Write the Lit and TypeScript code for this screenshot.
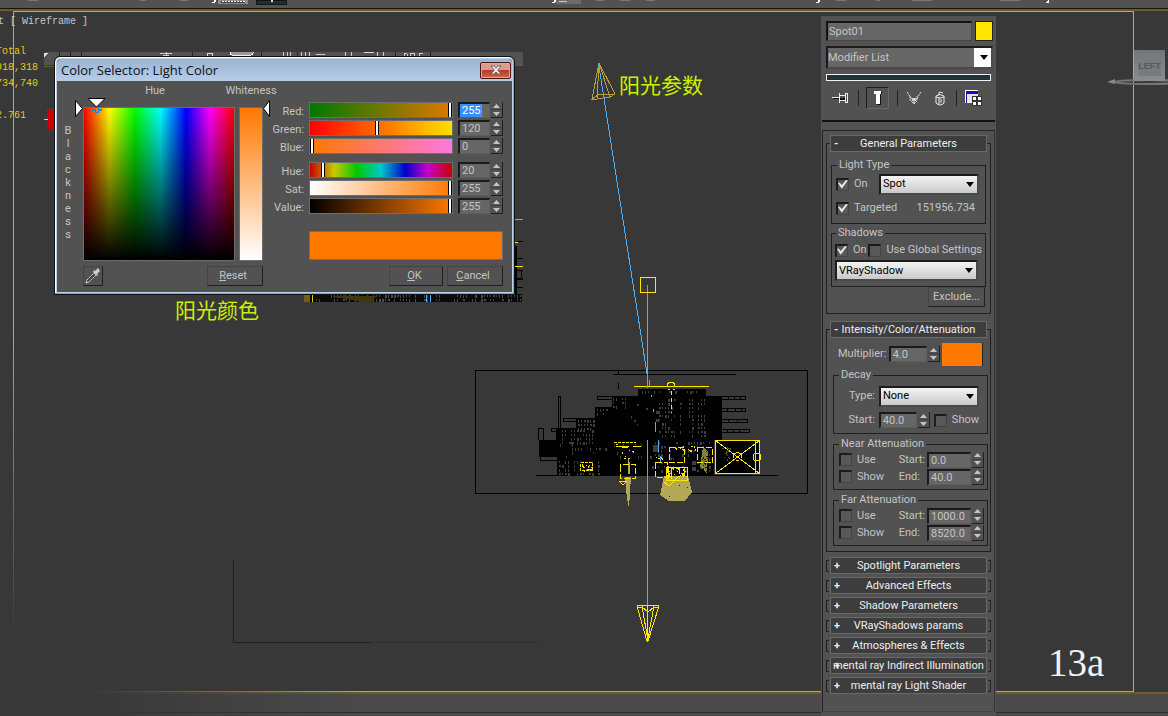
import { LitElement, html, svg, css } from "lit";
import { customElement } from "lit/decorators.js";

type Channel = { id: string; label: string; value: number };

const RGB: Channel[] = [
  { id: "red", label: "Red:", value: 255 },
  { id: "green", label: "Green:", value: 120 },
  { id: "blue", label: "Blue:", value: 0 },
];
const HSV: Channel[] = [
  { id: "hue", label: "Hue:", value: 20 },
  { id: "sat", label: "Sat:", value: 255 },
  { id: "val", label: "Value:", value: 255 },
];
const CLOSED = [
  "Spotlight Parameters",
  "Advanced Effects",
  "Shadow Parameters",
  "VRayShadows params",
  "Atmospheres & Effects",
  "mental ray Indirect Illumination",
  "mental ray Light Shader",
];

// Small deterministic generator used for the wireframe texture.
function random(seed: number) {
  let s = seed * 7919;
  return () => {
    s = (s * 16807) % 2147483647;
    return s / 2147483647;
  };
}

// Gaps between dense wires: columns of short slits inside a region.
function slits(seed: number, x: number, y: number, w: number, h: number, density: number) {
  const r = random(seed);
  let d = "";
  for (let cx = x; cx < x + w; cx += 3) {
    if (r() > 0.75) continue;
    for (let cy = y; cy < y + h; cy += 4) {
      if (r() < density) {
        const gw = r() > 0.7 ? 2 : 1;
        d += `M${cx} ${cy}h${gw}v${r() > 0.5 ? 3 : 2}h-${gw}z`;
      }
    }
  }
  return d;
}

function specks(seed: number, x: number, y: number, w: number, h: number, n: number) {
  const r = random(seed);
  let d = "";
  for (let i = 0; i < n; i++) {
    d += `M${x + Math.floor(r() * w)} ${y + Math.floor(r() * h)}h${1 + Math.floor(r() * 3)}v${1 + Math.floor(r() * 2)}h-1z`;
  }
  return d;
}

const scene = svg`
  <defs>
    <linearGradient id="fadeX" x1="0" x2="1" y1="0" y2="0">
      <stop offset="0" stop-color="#383838"/><stop offset="1" stop-color="#383838" stop-opacity="0"/>
    </linearGradient>
    <linearGradient id="fadeY" x1="0" x2="0" y1="0" y2="1">
      <stop offset="0" stop-color="#383838" stop-opacity="0"/><stop offset="1" stop-color="#383838"/>
    </linearGradient>
    <linearGradient id="cube" x1="0" x2="0" y1="0" y2="1">
      <stop offset="0" stop-color="#71747a"/><stop offset="1" stop-color="#8a8c91"/>
    </linearGradient>
  </defs>

  <g shape-rendering="crispEdges">
    <rect width="1168" height="8" fill="#525252"/>
    <rect y="8" width="1168" height="1" fill="#151515"/>
    <rect y="9" width="1168" height="2" fill="#6f5c24"/>
    <rect x="218" width="30" height="4" fill="#8b8b8b"/>
    <path d="M221 1h24v2h-24z" fill="#3f3f3f"/>
    <path d="M222 1.500h24" stroke="#fff" stroke-dasharray="2 1"/>
    <rect x="256" width="30" height="4" fill="#1f2e36" stroke="#161616"/>
    <rect x="271" width="2" height="2" fill="#ddd"/>
    <rect x="556" width="25" height="4" fill="#6c6c6c"/>
    <path d="M559 1.500h8" stroke="#ccc"/>
    <path d="M552 2h2v-2h1v1h-1v1h-2zM816 2h2v-2h1v1h-1v1h-2zM1046 2h2v-2M212 2h2v-2h1v1h-1v1h-2z" fill="#fff" stroke="#fff"/>
    <path d="M28 .5h10M140 .5h6M180 .5h8M596 .5h8M620 .5h10M646 .5h9M836 .5h10M876 .5h4M912 .5h20M1000 .5h20" stroke="#777"/>

    <rect y="692" width="1168" height="2" fill="#6f5c24"/>
    <rect y="694" width="1168" height="22" fill="#4a4a4a"/>
    <path d="M0 712.500h1168" stroke="#2c2c2c"/>
    <path d="M13.500 690V11.500H1133.500V691.500H14" fill="none" stroke="#c0b31a"/>
  </g>
  <rect x="0" y="690" width="90" height="26" fill="#383838"/>
  <rect x="90" y="690" width="280" height="26" fill="url(#fadeX)"/>
  <rect x="10" y="330" width="8" height="310" fill="url(#fadeY)"/>
  <rect x="10" y="640" width="8" height="60" fill="#383838"/>

  <g shape-rendering="crispEdges" fill="none">
    <path d="M233.500 560V642.500H370" stroke="#1e1e1e"/>
    <path d="M370 642.500h170" stroke="#303030"/>
  </g>

  <!-- second screenshot that lies under the dialog -->
  <g shape-rendering="crispEdges">
    <rect x="44" y="52" width="479" height="13" fill="#525252"/>
    <path d="M44 66.500h12M513 65.500h10" stroke="#6f5c24"/>
    <path d="M59.500 52v6M70.500 52v6M81.500 52v6M192.500 52v4M261.500 52v4M297.500 52v4M395.500 52v4M430.500 52v4" stroke="#222"/>
    <path d="M160 53.500h12M163 55.500h6M166 52v5M283 52v4M287 52v4M290 52v4M301 52v4M305 52v4M309 52v4M345 52v4M351 52v4M377 52v4M383 52v4M316 54.500h9M312 56.500h14" stroke="#ccc"/>
    <rect x="230" y="50" width="23" height="5" rx="2" fill="#999" stroke="#eee"/>
    <rect x="228" y="48" width="28" height="4" fill="#383838"/>
    <path d="M364 52.500h10M207 56v-3h5v3" stroke="#ddd" fill="none"/>
    <path d="M404 56v-2l2-1 1 1v2M410 56v-3h4v3M423 53h-4v3" stroke="#ccc" fill="none"/>
    <path d="M44 53h4l-4 4z" fill="#ddd"/>
    <rect x="47" y="109" width="8" height="20" fill="#cf0000"/>
    <path d="M44 119.500h4" stroke="#ffe600"/>
    <path d="M513 219.500h10" stroke="#c0b31a"/>
    <path d="M513 246h4v50h-4zM517 241h6v1h-6zM517 258h6v1h-6zM517 270h6v1h-6zM517 278h6v2h-6zM517 287h6v1h-6zM521 271v8h1v-8z" fill="#000"/>
    <path d="M515 242h3M515 266h8" stroke="#ffe600"/>
    <rect x="304" y="294" width="218" height="8" fill="#0b0b0b"/>
    <path d="${slits(77, 310, 295, 212, 7, 0.75)}" fill="#4a4a4a"/>
    <path d="M304 294h6v8h-6z" fill="#6d6022"/>
    <path d="M330 296h46l-4 6h-10z" fill="#3f380d"/>
    <path d="M312.500 294v8" stroke="#e5d500"/>
    <path d="M426.500 295v7M430.500 295v7" stroke="#4ab0ff"/>
  </g>

  <!-- building wireframe -->
  <g shape-rendering="crispEdges">
    <rect x="475.500" y="370.500" width="332" height="123" fill="none" stroke="#000"/>
    <path d="M613 374.500h123M618.500 371v4M618.500 383v6M536 475.500h242" stroke="#000"/>
    <path d="M638 389h68v7h16v44h-8v35H557v-18h-18v-17h17v-12h20v-10h19v-11h17v-11h26z" fill="#000"/>
    <g fill="none" stroke="#000">
      <path d="M558.500 428V396.500h2V428M538.500 440V428.500h5V440M540.500 457v3h17M612 396.500h-15v3h15M595 418.500h-32v3h32M556 428.500h-5v3h5"/>
      <path d="M722 396.500h23v3h-23M722 408.500h23v3h-23M722 419.500h25v3h-25M722 429.500h27v3h-27"/>
      <path d="M728.500 396v4M734.500 396v4M740.500 396v4M727.500 408v4M735.500 408v4M741.500 408v4M728.500 419v4M737.500 419v4M727.500 429v4M733.500 429v4M739.500 429v4"/>
    </g>
    <g fill="#3e3e3e">
      <path d="${slits(11, 613, 398, 14, 10, 0.9)}"/>
      <path d="${slits(23, 597, 409, 12, 8, 0.9)}"/>
      <path d="${slits(35, 578, 420, 16, 10, 0.9)}"/>
      <path d="${slits(47, 559, 430, 36, 14, 0.8)}"/>
      <path d="${slits(59, 642, 391, 64, 4, 0.7)}"/>
      <path d="${slits(61, 656, 399, 50, 40, 0.65)}"/>
      <path d="${slits(73, 560, 444, 92, 14, 0.3)}"/>
      <path d="${slits(85, 559, 461, 40, 13, 0.8)}"/>
      <path d="${slits(97, 652, 442, 60, 32, 0.35)}"/>
      <path d="${slits(15, 628, 404, 20, 34, 0.08)}"/>
      <path d="M656 411h4v3h-4zM656 419h3v3h-3zM653 445h5v7h-5zM692 461h4v4h-4zM692 467h4v4h-4zM569 442h5v2h-5z"/>
    </g>
    <path d="M625 477h6l-1 15-1 16-2-9z" fill="#b3a854"/>
    <path d="M628.500 458v16M629.500 462v12" stroke="#b3a854"/>
    <path d="M664 476h24l4 16-7 9h-16l-9-6z" fill="#b3a854"/>
    <path d="M703 447l5 4-1 23-7-7z" fill="#b3a854" opacity=".75"/>
    <path d="${specks(9, 701, 448, 7, 24, 14)}" fill="#111"/>
    <path d="M669 496h1v1h-1zM679 485h1v1h-1zM687 487h1v1h-1z" fill="#222"/>

    <path d="M634 386.500h75" stroke="#ffe600"/>
    <g fill="none" stroke="#ffe600">
      <path d="M667.500 386v-2l2-2h3l2 2v2M668 389h2M673 389h2"/>
      <path d="M671.500 391v22" stroke-dasharray="4 3"/>
      <rect x="715.500" y="440.500" width="44" height="33" fill="#000"/>
      <path d="M716 441l43 32M759 441l-43 32"/>
      <circle cx="737.500" cy="456.500" r="4"/>
      <circle cx="757" cy="457" r="4"/>
      <path d="M755.500 441v32"/>
      <path d="M620.500 470v-5.500h15v14h-15z" stroke-dasharray="6 2"/>
      <path d="M616 446.500h13M633 446.500h8M616 444.500h2M622 447.500h6"/>
      <path d="M614 442h22" stroke-dasharray="3 1"/>
      <path d="M669.500 447.500h15v15h-15zM697.500 447.500h15v15h-15zM655.500 462.500h12v15h-12z" stroke-dasharray="6 2"/>
      <path d="M666.500 467.500h21v13h-21zM668 466v14M671 467v12M679 468v6M684 467v9"/>
      <path d="M619 481h8l-4 4zM663 481l6 5 9-9"/>
      <rect x="580.500" y="462.500" width="12" height="8" stroke-dasharray="3 1"/>
    </g>
    <path d="${specks(19, 581, 463, 10, 8, 13)}" fill="#ffe600"/>
    <path d="${specks(29, 666, 466, 20, 12, 34)}" fill="#ffe600"/>
    <path d="${specks(39, 655, 457, 10, 3, 6)}${specks(49, 688, 446, 8, 5, 7)}${specks(59, 622, 449, 14, 12, 6)}${specks(69, 674, 446, 10, 5, 8)}" fill="#ffe600"/>
    <path d="${specks(79, 717, 446, 14, 14, 12)}" fill="#5c5218"/>
  </g>

  <!-- spot light, its target line and the target cone -->
  <g fill="none" shape-rendering="crispEdges">
    <path d="M599 63L592 99l5 0L599 63L615 94l-5 3-13 2M599 63l11 34M592 99l6-4 17-1" stroke="#b3a040"/>
    <path d="M598.500 63L648 380" stroke="#4ab0ff"/>
    <path d="M649.500 380v6M651.500 395v2M653.500 409v3M655.500 422v10M658.500 440v12M660.500 456v6" stroke="#4ab0ff"/>
    <path d="M647.500 285V388M647.500 440V494" stroke="#4ab0ff"/>
    <path d="M647.500 494V606" stroke="#85a0b2"/>
    <rect x="640.500" y="277.500" width="15" height="15" stroke="#ffe600"/>
    <path d="M637 605.500h22M637 606l10 35M659 606l-11 35M642 606l5.500 32M654 606l-6 32M638 607h4l6 5 6-5h4M647.500 606v36" stroke="#ffe600"/>
  </g>

  <ellipse cx="1148" cy="82" rx="34" ry="2" fill="none" stroke="#73757a" stroke-width="2"/>
  <path d="M1107 82l8-3v5z" fill="#888"/>
  <rect x="1134" y="50" width="31" height="31" fill="url(#cube)"/>
  <rect x="1138" y="54" width="23" height="22" fill="#777a7f"/>
  <text class="cube" x="1149.500" y="69" text-anchor="middle">LEFT</text>

  <g class="stat">
    <text x="-2" y="24" fill="#c6c6c6" xml:space="preserve">t [ Wireframe ]</text>
    <g fill="#e0ca1c">
      <text x="-4" y="54">Total</text>
      <text x="-4" y="70">918,318</text>
      <text x="-4" y="86">734,740</text>
      <text x="-4" y="118">2.761</text>
    </g>
  </g>
  <g class="note">
    <text x="619" y="93">阳光参数</text>
    <text x="175" y="318">阳光颜色</text>
  </g>
  <text class="figure" x="1048" y="676">13a</text>
`;

@customElement("app-root")
export class AppRoot extends LitElement {
  static styles = css`
    :host {
      display: block;
      position: relative;
      min-height: 100vh;
      overflow: hidden;
      background: #383838;
      color: #c4c4c4;
      font: 11px/14px Roboto, "Liberation Sans", sans-serif;
    }
    * { box-sizing: border-box; }
    button, input, select { font: inherit; color: inherit; margin: 0; padding: 0; border-radius: 0; }
    button { cursor: default; }

    .scene { position: absolute; inset: 0; width: 100%; height: 100%; }
    .stat { font: 10px "Liberation Mono", monospace; }
    .note { font: 21px "Noto Sans CJK SC", sans-serif; fill: #cbf000; }
    .figure { font: 39px "Liberation Serif", serif; fill: #f2f2f2; }
    .cube { font: bold 9px "Liberation Sans", sans-serif; fill: #55585d; }

    .desk { position: relative; display: flex; justify-content: flex-end; padding: 16px 172px 0 0; min-height: 100vh; }

    /* dialog window */
    .dialog {
      position: absolute; left: 54px; top: 56px;
      background: #525252;
      border: 1px solid #111; border-radius: 6px 6px 0 0;
      box-shadow: inset -1px -1px 0 #3fc3e6, inset 1px 1px 0 #fff, inset 0 0 0 2px #b9cfe6;
      padding: 2px;
    }
    .title {
      display: flex; align-items: center; justify-content: space-between;
      height: 22px; padding: 0 1px 0 4px;
      background: linear-gradient(#9db4d2, #b6cde8);
      border-radius: 4px 4px 0 0;
      color: #0a1018; font: 13px/20px "Open Sans", "Noto Sans", sans-serif;
    }
    .close {
      display: grid; place-items: center; width: 31px; height: 17px;
      border: 1px solid #4a1712; border-radius: 2px;
      box-shadow: inset 0 0 0 1px #e2a79a;
      background: linear-gradient(#dc9b8c 0 45%, #b73a25 50%, #cf6a50);
    }
    .body { display: flex; padding-bottom: 6px; }
    .mix { display: grid; grid-template-columns: 26px 156px 24px; grid-template-rows: 26px 154px 25px; }
    .cap { justify-self: center; padding-top: 3px; white-space: nowrap; }
    .cap-hue { grid-column: 2; padding-right: 12px; }
    .black { display: grid; grid-auto-rows: 13px; width: 22px; padding-top: 17px; text-align: center; line-height: 13px; }
    .spectrum {
      position: relative; width: 152px; border: 1px solid #6d6d6d;
      background: linear-gradient(transparent, #000), linear-gradient(90deg, #f00, #ff0 17%, #0f0 34%, #0ff 51%, #00f 68%, #f0f 84%, #f00);
    }
    .marks { position: absolute; left: -9px; top: -12px; overflow: visible; }
    .white { border: 1px solid #6d6d6d; background: linear-gradient(#ff7800, #fff); }
    .foot { grid-column: 2 / 4; display: flex; justify-content: space-between; margin-top: 5px; height: 20px; }
    .btn {
      height: 20px; background: #525252; line-height: 16px;
      border: 1px solid; border-color: #444 #1f1f1f #1f1f1f #444;
    }
    .pick { width: 20px; display: grid; place-items: center; }
    .w56 { width: 56px; padding-right: 4px; }
    .w54 { width: 54px; padding-right: 3px; }

    .values { padding: 21px 9px 0 0; }
    .channels { display: grid; row-gap: 2px; }
    .channels + .channels { margin-top: 8px; }
    .channel { display: grid; grid-template-columns: 41px 144px 45px; column-gap: 5px; height: 16px; }
    .channel label { text-align: right; line-height: 19px; }
    .slider { appearance: none; width: 144px; height: 16px; border: 1px solid #6d6d6d; outline: 0; }
    .slider::-webkit-slider-thumb { appearance: none; width: 4px; height: 14px; background: #fff; border: solid #000; border-width: 0 1px; }
    .red { background: linear-gradient(90deg, #007800, #e07800); }
    .green { background: linear-gradient(90deg, #f00, #ffe000); }
    .blue { background: linear-gradient(90deg, #ff7800, #ff78e0); }
    .hue { background: linear-gradient(90deg, #c80000, #c8c800 17%, #00c800 33%, #00c8c8 50%, #0000c8 67%, #c800c8 83%, #c80000); }
    .sat { background: linear-gradient(90deg, #fff, #ff7800); }
    .val { background: linear-gradient(90deg, #000, #ff7800); }
    .preview { height: 29px; margin: 17px 0 6px 46px; border: 1px solid #6d6d6d; background: #ff7800; }
    .actions { display: flex; justify-content: flex-end; gap: 4px; }

    .spin { display: flex; height: 16px; }
    .spin input {
      min-width: 0; flex: 1; padding: 0 2px; height: 16px; background: #666; outline: 0;
      border: solid; border-width: 2px 1px 1px 2px; border-color: #1a1a1a #5e5e5e #5e5e5e #1a1a1a;
    }
    .spin input.picked { background: linear-gradient(90deg, #3390ff 21px, #e07818 21px 22px, #666 22px); color: #fff; }
    .arrows { display: grid; width: 12px; border: solid #1f1f1f; border-width: 0 1px 1px 0; margin-left: 1px; }
    .arrows button { display: grid; place-items: center; border: 0; background: #525252; min-height: 0; }
    .arrows button + button { border-top: 1px solid #404040; }
    .arrows svg { display: block; }

    /* command panel */
    .panel { width: 175px; padding: 5px 1px 4px; background: #525252; display: flex; flex-direction: column; }
    .top { display: grid; grid-template-columns: minmax(0, 1fr); row-gap: 5px; padding: 0 2px 10px 4px; border-bottom: 2px solid #111; }
    .named { display: flex; justify-content: space-between; height: 20px; }
    .name {
      flex: 1; min-width: 0; margin-right: 3px; padding: 0 1px; background: #666; outline: 0;
      border: solid; border-width: 2px 1px 1px 2px; border-color: #141414 #484848 #484848 #141414;
    }
    .swatch { width: 18px; background: #ffe600; border: 1px solid #222; padding: 0; }
    .pickbox { display: grid; grid-template-columns: minmax(0, 1fr); align-items: center; }
    .pickbox > * { grid-area: 1 / 1; }
    .pickbox svg { justify-self: end; margin-right: 4px; pointer-events: none; }
    select {
      appearance: none; width: 100%; height: 21px; padding: 0 2px !important; outline: 0;
      color: #000; background: linear-gradient(#f4f4f4, #c9c9c9);
      border: solid; border-width: 2px; border-color: #1c1c1c #4a4a4a #4a4a4a #1c1c1c;
    }
    select.list { height: 23px; padding: 0 !important; color: #c4c4c4; background: linear-gradient(270deg, #fff 17px, #666 17px); }
    .name, select.list { font-size: 11px; }
    .stack { height: 7px; margin-right: 2px; background: #203238; border: 1px solid #f2f2f2; }
    .tools { display: flex; align-items: center; justify-content: space-between; height: 24px; padding: 0 10px 0 6px; }
    .tool { display: grid; place-items: center; width: 18px; height: 22px; border: 0; background: none; }
    .tool.on { width: 23px; border: 1px solid; border-color: #1d1d1d #6a6a6a #6a6a6a #1d1d1d; }
    .bar { width: 1px; height: 16px; background: #222; }

    .rolls { flex: 1; margin-top: 8px; padding: 12px 3px 0; border: 1px solid #222; border-right-color: #333; border-bottom-color: #444; }
    .roll { border: 1px solid #1f1f1f; padding: 0 4px 6px; margin-bottom: 15px; }
    .head {
      display: grid; grid-template-columns: minmax(0, 1fr); align-items: center; height: 17px; width: 100%; min-width: 0;
      background: #3d3d3d; border: 1px solid #696969; color: #eee; line-height: 14px; white-space: nowrap;
    }
    .head > * { grid-area: 1 / 1; }
    .head > .sign { justify-self: start; padding-left: 3px; font-weight: bold; }
    .head > .name-of { justify-self: center; }
    .roll > .head { width: auto; margin: -9px -1px 0; min-width: 157px; }
    fieldset { margin: 0; border: 1px solid #1f1f1f; min-width: 0; padding: 0 3px 0 4px; }
    legend { padding: 0 2px; margin-left: 1px; line-height: 14px; }
    .row { display: flex; align-items: center; }
    .check { display: flex; align-items: center; gap: 5px; white-space: nowrap; }
    .check input {
      appearance: none; width: 13px; height: 13px; background: #585858; outline: 0;
      border: solid; border-width: 2px 1px 1px 2px; border-color: #1c1c1c #444 #444 #1c1c1c;
    }
    .check input:checked::before {
      content: ""; display: block; width: 10px; height: 9px; background: #e6e6e6;
      clip-path: polygon(0 40%, 15% 32%, 38% 62%, 82% 4%, 98% 10%, 42% 98%, 34% 98%);
    }

    .kind { margin-top: 6px; height: 66px; }
    .kind .row { height: 24px; justify-content: space-between; }
    .kind .pickbox { width: 100px; margin-right: 3px; }
    .kind .dist { padding-right: 7px; }
    .shadows { margin-top: 2px; height: 61px; padding-left: 3px; }
    .shadows .row { height: 20px; justify-content: space-between; }
    .shadows .pickbox { width: 143px; }
    .exclude { display: block; width: 57px; margin-left: auto; margin-right: 1px; }

    .intensity { padding: 0 2px 5px 6px; margin-bottom: 5px; }
    .intensity > .head { margin: -9px 1px 0 -3px; }
    .multi { height: 30px; padding: 2px 5px 0; justify-content: space-between; }
    .multi .spin { width: 51px; }
    .rgb { width: 41px; height: 23px; background: #ff7800; border: 0; border-right: 1px solid #222; }
    .decay { height: 66px; padding-top: 2px; }
    .decay .row { height: 24px; justify-content: flex-end; gap: 4px; padding-right: 5px; }
    .decay .pickbox { width: 100px; }
    .decay .spin { width: 51px; }
    .atten, .far { margin-top: 3px; height: 53px; }
    .atten-grid { display: grid; grid-template-columns: 1fr auto 57px; align-items: center; column-gap: 2px; grid-auto-rows: 17px; padding-left: 1px; }

    .closed { list-style: none; margin: 0; padding: 0; display: grid; row-gap: 3px; }
    .closed li { display: grid; grid-template-columns: 3px minmax(0, 1fr) 3px; column-gap: 1px; align-items: center; }
    .closed li::before, .closed li::after { content: ""; height: 10px; border: 1px solid #1f1f1f; }
    .closed li::before { border-right: 0; }
    .closed li::after { border-left: 0; }
  `;

  private arrows(name: string) {
    return html`<span class="arrows">
      <button aria-label="Increase ${name}"><svg width="7" height="4"><path d="M3.500 0L7 4H0z" fill="#c4c4c4"/></svg></button>
      <button aria-label="Decrease ${name}"><svg width="7" height="4"><path d="M0 0h7L3.500 4z" fill="#c4c4c4"/></svg></button>
    </span>`;
  }

  private spin(id: string, value: string, name: string, picked = false) {
    return html`<span class="spin"><input id=${id} class=${picked ? "picked" : ""} type="text" aria-label=${name} .value=${value} />${this.arrows(name)}</span>`;
  }

  private channel(c: Channel) {
    return html`<div class="channel">
      <label for=${c.id}>${c.label}</label>
      <input id=${c.id} class="slider ${c.id}" type="range" min="0" max="255" .value=${String(c.value)} />
      ${this.spin(c.id + "-n", String(c.value), c.label, c.id === "red")}
    </div>`;
  }

  private pick(id: string, value: string, name: string, cls = "") {
    return html`<span class="pickbox"><select id=${id} class=${cls} aria-label=${name}><option>${value}</option></select>
      <svg width="9" height="5"><path d="M0 0h8L4 5z" fill="#000"/></svg></span>`;
  }

  private check(label: string, on = false) {
    return html`<label class="check"><input type="checkbox" .checked=${on} />${label}</label>`;
  }

  private head(sign: string, title: string) {
    return html`<button class="head"><span class="sign">${sign}</span><span class="name-of">${title}</span></button>`;
  }

  private attenuation(kind: string, start: string, end: string) {
    const id = kind.toLowerCase();
    return html`<fieldset class=${id === "near" ? "atten" : "far"}>
      <legend>${kind} Attenuation</legend>
      <div class="atten-grid">
        ${this.check("Use")}<label for="${id}-s">Start:</label>${this.spin(id + "-s", start, kind + " start")}
        ${this.check("Show")}<label for="${id}-e">End:</label>${this.spin(id + "-e", end, kind + " end")}
      </div>
    </fieldset>`;
  }

  private dialog() {
    return html`<section class="dialog" role="dialog" aria-labelledby="dlg">
      <header class="title">
        <span id="dlg">Color Selector: Light Color</span>
        <button class="close" aria-label="Close"><svg width="12" height="10" viewBox="0 0 12 10"><path d="M1 1h3l2 2.200L8 1h3L7.600 5 11 9H8L6 6.800 4 9H1l3.400-4z" fill="#fff" stroke="#54504f" stroke-width=".8"/></svg></button>
      </header>
      <div class="body">
        <div class="mix">
          <span class="cap cap-hue">Hue</span><span class="cap">Whiteness</span>
          <div class="black">${[..."Blackness"].map((c) => html`<span>${c}</span>`)}</div>
          <div class="spectrum">
            <svg class="marks" width="190" height="30">
              <path d="M.5 4.500v16l7-8z" fill="#fff" stroke="#000"/>
              <path d="M13 2.500h17l-8.500 8.500z" fill="#fff" stroke="#000"/>
              <path d="M194.500 4.500v16l-6-8z" fill="#fff" stroke="#000"/>
              <path d="M17 13h3v-1h4v1h3v2h-3v2h-4v-2h-3z" fill="#1686f5"/><path d="M21 12h2v4h-2z" fill="#ff7800"/>
            </svg>
          </div>
          <div class="white"></div>
          <div></div>
          <div class="foot">
            <button class="btn pick" aria-label="Sample screen color"><svg width="18" height="18" viewBox="0 0 18 18"><path d="M2 16l1-3 7-7 2 2-7 7z" fill="#444" stroke="#ddd" stroke-dasharray="2 .6"/><path d="M9 5l4 4 1-1-1-1 3-3-2-3-3 3-1-1z" fill="#ccc"/></svg></button>
            <button class="btn w56"><u>R</u>eset</button>
          </div>
        </div>
        <div class="values">
          <div class="channels">${RGB.map((c) => this.channel(c))}</div>
          <div class="channels">${HSV.map((c) => this.channel(c))}</div>
          <div class="preview"></div>
          <div class="actions"><button class="btn w54"><u>O</u>K</button><button class="btn w56"><u>C</u>ancel</button></div>
        </div>
      </div>
    </section>`;
  }

  private panel() {
    return html`<aside class="panel">
      <div class="top">
        <div class="named"><input class="name" type="text" aria-label="Object name" .value=${"Spot01"} /><button class="swatch" aria-label="Object color"></button></div>
        ${this.pick("mods", "Modifier List", "Modifier List", "list")}
        <div class="stack"></div>
        <div class="tools">
          <button class="tool" aria-label="Pin stack"><svg width="18" height="12" viewBox="0 0 18 12" shape-rendering="crispEdges"><path d="M0 5.500h7M7.500 1v10M8 3.500h5M8 8.500h5M13.500 1v10M15.500 1v10M13 1.500h3M13 10.500h3" stroke="#eee" fill="none"/><path d="M8 6h5v2H8z" fill="#111"/><path d="M1 6.500h6" stroke="#111"/></svg></button>
          <span class="bar"></span>
          <button class="tool on" aria-label="Show end result"><svg width="10" height="14" viewBox="0 0 10 14" shape-rendering="crispEdges"><path d="M2 1h7v2H8v11H4V3H2z" fill="#111"/><path d="M1 0h7v3H7v10H3V3H1z" fill="#fff"/></svg></button>
          <span class="bar"></span>
          <button class="tool" aria-label="Make unique"><svg width="16" height="14" viewBox="0 0 16 14"><path d="M1 1l4 6 3 5 3-5 4-6M4 5v4l4 4 3-3V5M6 8h4" stroke="#eee" fill="none" stroke-dasharray="2 1"/><path d="M6 7l2 4 2-4z" fill="#ddd"/></svg></button>
          <button class="tool" aria-label="Remove modifier"><svg width="12" height="15" viewBox="0 0 12 15"><path d="M2 5q4-3 8 0v7q-4 4-8 0zM2 6q4 2 8 0M5 4q-1-3 1-3l3 1M5 7v6M7 8v4" stroke="#eee" fill="none"/></svg></button>
          <span class="bar"></span>
          <button class="tool" aria-label="Configure sets"><svg width="17" height="16" viewBox="0 0 17 16" shape-rendering="crispEdges"><path d="M.5.500h12v12H.5z" fill="#e4e4e4" stroke="#fff"/><path d="M1 1h12v3H1zM1 1h1v12H1z" fill="#1010b4"/><path d="M7 6h4v4H7zM12 6h4v4h-4zM7 11h4v4H7zM12 11h4v4h-4z" fill="#fff" stroke="#333"/></svg></button>
        </div>
      </div>
      <div class="rolls">
        <section class="roll general">
          ${this.head("-", "General Parameters")}
          <fieldset class="kind">
            <legend>Light Type</legend>
            <div class="row">${this.check("On", true)}${this.pick("type", "Spot", "Light type")}</div>
            <div class="row">${this.check("Targeted", true)}<span class="dist">151956.734</span></div>
          </fieldset>
          <fieldset class="shadows">
            <legend>Shadows</legend>
            <div class="row">${this.check("On", true)}${this.check("Use Global Settings")}</div>
            ${this.pick("shadow", "VRayShadow", "Shadow type")}
          </fieldset>
          <button class="btn exclude">Exclude...</button>
        </section>
        <section class="roll intensity">
          ${this.head("-", "Intensity/Color/Attenuation")}
          <div class="row multi"><label for="mult">Multiplier:</label>${this.spin("mult", "4.0", "Multiplier")}<button class="rgb" aria-label="Light color"></button></div>
          <fieldset class="decay">
            <legend>Decay</legend>
            <div class="row"><label for="decay">Type:</label>${this.pick("decay", "None", "Decay type")}</div>
            <div class="row"><label for="ds">Start:</label>${this.spin("ds", "40.0", "Decay start")}${this.check("Show")}</div>
          </fieldset>
          ${this.attenuation("Near", "0.0", "40.0")}
          ${this.attenuation("Far", "1000.0", "8520.0")}
        </section>
        <ul class="closed">${CLOSED.map((t) => html`<li>${this.head("+", t)}</li>`)}</ul>
      </div>
    </aside>`;
  }

  render() {
    return html`
      <svg class="scene" viewBox="0 0 1168 716" preserveAspectRatio="xMinYMin slice">${scene}</svg>
      <main class="desk">${this.dialog()}${this.panel()}</main>
    `;
  }
}
